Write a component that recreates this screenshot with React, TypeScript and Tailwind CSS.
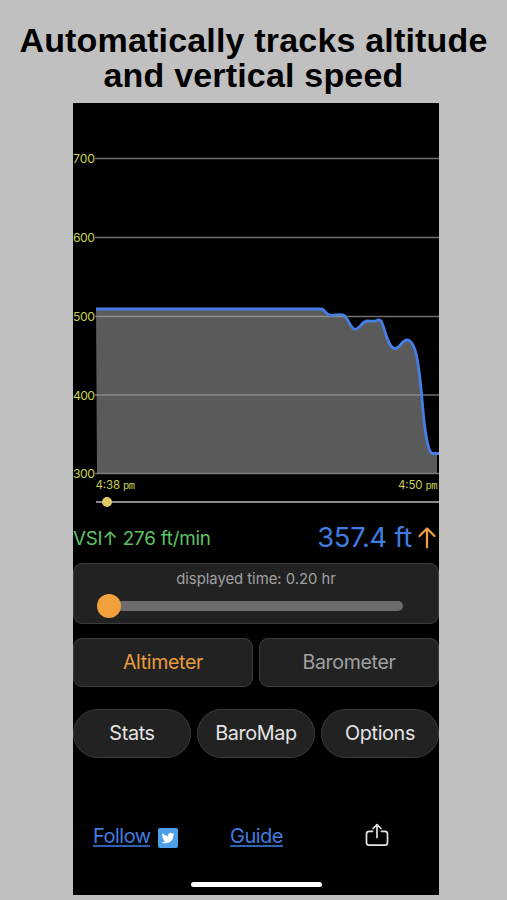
const GRID = [
  { label: '700', y: 55.5 },
  { label: '600', y: 134.5 },
  { label: '500', y: 213.5 },
  { label: '400', y: 292 },
  { label: '300', y: 370.5 },
];

const CURVE =
  'M23 206H248C252 206 253 212.3 258 212.3C262 212.3 266 211 270 211.8C275 213 277 226.3 282 226.3C287 226.3 289 218 294 218C298 218 301 218.2 303 218C305 216.5 307 216.5 308.5 218.5C312 226 315 245.5 322 245.5C327 245.5 329 237 334 237C339 237 342 245 344 255C349 282 349 305 352 325C354 340 356 350.5 360 350.5';

const TABS = [
  { label: 'Altimeter', active: true },
  { label: 'Barometer', active: false },
];

const ACTIONS = ['Stats', 'BaroMap', 'Options'];

function TimeLabel({ x, time }: { x: number; time: string }) {
  return (
    <>
      <text x={x} y="385.5" fontSize="11.5" textLength="24.5">{time}</text>
      <text x={x + 27.5} y="385.5" fontSize="10.5" textLength="12" fontFamily="Liberation Mono, monospace">pm</text>
    </>
  );
}

function AltitudeChart() {
  return (
    <svg width="366" height="410" viewBox="0 0 366 410" className="block shrink-0">
      <path d={`${CURVE}H364V370.5H24Z`} fill="#5a5a5a" />
      {GRID.map(g => (
        <path key={g.label} d={`M22 ${g.y}H366`} stroke="#a0a0a0" strokeOpacity="0.7" strokeWidth="1.6" />
      ))}
      <path d={`${CURVE}H366`} fill="none" stroke="#467ee6" strokeWidth="2.8" />
      <g fill="#c9d24e" fontFamily="Inter, sans-serif">
        {GRID.map(g => (
          <text key={g.label} x="0" y={g.y + 4.5} fontSize="12.2" textLength="22">{g.label}</text>
        ))}
        <TimeLabel x={22.5} time="4:38" />
        <TimeLabel x={325} time="4:50" />
      </g>
      <path d="M23 399H366" stroke="#8a8a8a" strokeWidth="1.8" />
      <circle cx="34" cy="399" r="5" fill="#dfca6b" />
    </svg>
  );
}

function ShareIcon() {
  return (
    <svg width="24" height="24" viewBox="0 0 24 24" fill="none" stroke="#e6e6e6" strokeWidth="1.7" strokeLinecap="round" strokeLinejoin="round">
      <path d="M7.5 8.3H4.2Q1.5 8.3 1.5 11V19.4Q1.5 22.1 4.2 22.1H19.8Q22.5 22.1 22.5 19.4V11Q22.5 8.3 19.8 8.3H16.5" />
      <path d="M12 14.5V2M8 5.5L12 1.7L16 5.5" />
    </svg>
  );
}

function TwitterIcon() {
  return (
    <svg width="20" height="20" viewBox="0 0 20 20">
      <rect width="20" height="20" rx="2" fill="#4f9fe6" />
      <path
        transform="translate(3.6 3.6) scale(0.54)"
        fill="#fff"
        d="M23.95 4.57a10 10 0 0 1-2.82.78 4.96 4.96 0 0 0 2.16-2.72 9.9 9.9 0 0 1-3.12 1.18 4.92 4.92 0 0 0-8.38 4.48A13.94 13.94 0 0 1 1.64 3.16a4.92 4.92 0 0 0 1.52 6.57 4.9 4.9 0 0 1-2.23-.61v.06a4.92 4.92 0 0 0 3.95 4.83 5 5 0 0 1-2.21.08 4.94 4.94 0 0 0 4.6 3.42A9.87 9.87 0 0 1 0 19.54a14 14 0 0 0 7.55 2.21c9.05 0 14-7.5 14-13.98 0-.21 0-.42-.02-.63a9.94 9.94 0 0 0 2.46-2.55z"
      />
    </svg>
  );
}

export default function App() {
  return (
    <div className="flex h-[900px] w-[507px] flex-col overflow-hidden bg-[#c0c0c0] font-['Inter',sans-serif]">
      <h1 className="h-[103px] shrink-0 pt-[23px] text-center font-['Liberation_Sans',sans-serif] text-[34px] leading-[35px] font-bold tracking-[0.18px] whitespace-nowrap text-black">
        Automatically tracks altitude
        <br />
        and vertical speed
      </h1>

      <main className="ml-[73px] flex h-[792px] w-[366px] shrink-0 flex-col bg-black">
        <AltitudeChart />

        <div className="flex h-[50px] items-center justify-between whitespace-nowrap">
          <span className="pt-[2px] text-[18.8px] tracking-[-0.23px] text-[#5fc466]">VSI↑ 276 ft/min</span>
          <div className="flex items-center gap-[6px] pr-[3px]">
            <span className="text-[27.3px] tracking-[-0.25px] text-[#3f7de0]">357.4 ft</span>
            <svg width="18" height="22" viewBox="0 0 18 22" fill="none" stroke="#eea042" strokeWidth="2.2" strokeLinecap="round" strokeLinejoin="round">
              <path d="M9 20.5V1.5M1.5 9L9 1.5L16.5 9" />
            </svg>
          </div>
        </div>

        <section className="flex h-[61px] shrink-0 flex-col rounded-[9px] border border-[#3c3c3c] bg-[#222]">
          <p className="pt-[5px] text-center text-[14.8px] leading-5 whitespace-nowrap text-[#a0a0a0]">displayed time: 0.20 hr</p>
          <div className="mt-[5px] ml-[23px] flex h-6 w-[306px] items-center">
            <div className="z-10 size-6 shrink-0 rounded-full bg-[#f2a03c]" />
            <div className="-ml-1 h-[10px] flex-1 rounded-r-full bg-[#6b6b6b]" />
          </div>
        </section>

        <div className="mt-[14px] grid h-[49px] shrink-0 grid-cols-2 gap-[6px]">
          {TABS.map(t => (
            <button
              key={t.label}
              className={`rounded-[9px] border border-[#3c3c3c] bg-[#222] pt-px text-[19.6px] tracking-[-0.35px] ${t.active ? 'text-[#e99c3c]' : 'text-[#a0a0a0]'}`}
            >
              {t.label}
            </button>
          ))}
        </div>

        <div className="mt-[22px] grid h-[49px] shrink-0 grid-cols-3 gap-[6px]">
          {ACTIONS.map(a => (
            <button key={a} className="rounded-full border border-[#3c3c3c] bg-[#222] pt-px text-[19.8px] tracking-[-0.35px] text-[#e4e4e4]">
              {a}
            </button>
          ))}
        </div>

        <footer className="mt-[63px] flex h-7 items-center text-[20px] tracking-[-0.5px] text-[#3f7de0]">
          <a className="ml-5 h-[24px] w-[57px] border-b-2 border-[#2f5fae] leading-[26px]">Follow</a>
          <span className="mt-[5px] ml-2">
            <TwitterIcon />
          </span>
          <a className="ml-[52px] h-[24px] w-[53px] border-b-2 border-[#2f5fae] leading-[26px]">Guide</a>
          <span className="ml-[82px]">
            <ShareIcon />
          </span>
        </footer>
        <div className="mt-[33px] ml-[118px] h-[5px] w-[131px] rounded-full bg-white" />
      </main>
    </div>
  );
}
